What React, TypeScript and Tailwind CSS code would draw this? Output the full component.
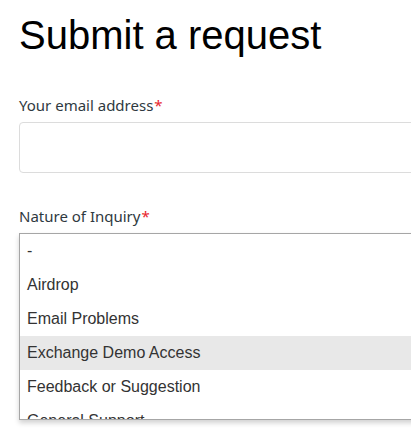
import React from 'react';

function App() {
  const options = [
    "-",
    "Airdrop",
    "Email Problems",
    "Exchange Demo Access",
    "Feedback or Suggestion",
    "General Support",
    "Listing Request",
  ];

  return (
    <div className="w-[411px] h-[434px] overflow-hidden bg-white">
      <div className="w-[560px] pl-[19px]">
        <h1 className="mt-[11px] text-[40px] leading-[48px] text-black font-['Liberation_Sans',Arial,sans-serif]">
          Submit a request
        </h1>

        {/* Email */}
        <div className="mt-[36px]">
          <label className="block text-[15px] leading-[21px] text-[#2f3941] font-['Noto_Sans',sans-serif]">
            Your email address<span className="text-[#e8242c] ml-[1px]">*</span>
          </label>
          <div className="mt-[6px] h-[51px] rounded-[4px] border border-[#dcdcdc] bg-white" />
        </div>

        {/* Nature of Inquiry */}
        <div className="mt-[33px]">
          <label className="block text-[15px] leading-[21px] text-[#2f3941] font-['Noto_Sans',sans-serif]">
            Nature of Inquiry<span className="text-[#e8242c] ml-[1px]">*</span>
          </label>
          <div className="mt-[6px] h-[187px] overflow-hidden border border-[#a6a6a6] bg-white shadow-[0_3px_5px_rgba(0,0,0,0.18)]">
            {options.map((opt) => (
              <div
                key={opt}
                className={`h-[34px] leading-[34px] px-[7px] text-[16px] text-[#333] font-['Liberation_Sans',Arial,sans-serif] ${
                  opt === "Exchange Demo Access" ? "bg-[#e8e8e8]" : ""
                }`}
              >
                {opt}
              </div>
            ))}
          </div>
        </div>
      </div>
    </div>
  );
}

export default App;
